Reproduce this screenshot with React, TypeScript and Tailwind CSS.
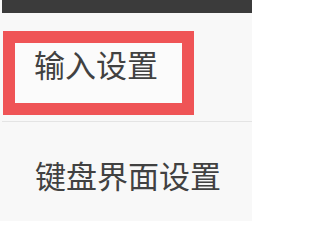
export default function App() {
  return (
    <div className="w-[252px] h-[221px] bg-[#f8f8f8] overflow-hidden font-['Noto_Sans_CJK_SC','Noto_Sans',sans-serif] text-[#414141]">
      <div className="h-[13px] ml-[2px] bg-[#3b3b3b]" />
      <div className="pl-[3px] pt-[18px]">
        <div className="w-[191px] h-[84px] border-[12px] border-[#ef5456] bg-[#fbfbfb] flex items-start pt-[5px] pl-[19px]">
          <span className="text-[31px] leading-none">输入设置</span>
        </div>
      </div>
      <div className="mt-[6px] ml-[2px] h-px bg-[#e4e4e4]" />
      <div className="pl-[35px] pt-[37px]">
        <span className="text-[31px] leading-none">键盘界面设置</span>
      </div>
    </div>
  );
}
